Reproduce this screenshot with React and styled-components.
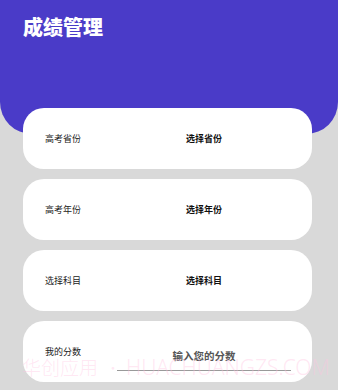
import React from "react";
import styled, { createGlobalStyle } from "styled-components";

const Global = createGlobalStyle`
  html, body { margin: 0; padding: 0; background: #d9d9d9; }
  body { font-family: "Noto Sans CJK SC", "Noto Sans", sans-serif; }
  * { box-sizing: border-box; }
`;

const Page = styled.div`
  position: relative;
  min-height: 390px;
  background: #d9d9d9;
  overflow: hidden;
`;

const Header = styled.header`
  height: 134px;
  background: #4a3bc8;
  border-radius: 0 0 32px 32px;
  padding: 12px 23px;
`;

const Title = styled.h1`
  margin: 0;
  color: #ffffff;
  font-size: 20px;
  font-weight: 900;
  line-height: 30px;
  letter-spacing: 0;
`;

const CardList = styled.div`
  display: flex;
  flex-direction: column;
  gap: 10px;
  margin-top: -26px;
  padding: 0 26px 0 23px;
`;

const Card = styled.div`
  height: 61px;
  background: #ffffff;
  border-radius: 21px;
  display: grid;
  grid-template-columns: ${(p) => p.$cols || "141px 1fr"};
  align-items: center;
  padding-left: 22px;
`;

const Label = styled.span`
  font-size: 9px;
  color: #222222;
  line-height: 14px;
`;

const Value = styled.span`
  font-size: 9px;
  font-weight: 700;
  color: #111111;
  line-height: 14px;
`;

const ScoreInput = styled.input`
  width: 174px;
  height: 30px;
  margin-top: 8px;
  border: none;
  border-bottom: 1px solid #9a9a9a;
  background: transparent;
  text-align: center;
  font-family: "Noto Sans CJK SC", "Noto Sans", sans-serif;
  font-size: 10.5px;
  font-weight: 700;
  outline: none;
  padding: 0;
  &::placeholder { color: #555555; }
`;

const Watermark = styled.div`
  position: absolute;
  left: 22px;
  top: 355px;
  display: flex;
  align-items: center;
  line-height: 24px;
  color: rgba(255, 195, 225, 0.4);
  white-space: nowrap;
  pointer-events: none;
  font-family: "Noto Sans CJK SC", "Noto Sans", sans-serif;
  font-weight: 300;
`;

const MarkCjk = styled.span`
  font-size: 19px;
`;

const MarkDot = styled.span`
  font-size: 14px;
  margin: 0 6px 0 8px;
`;

const MarkLatin = styled.span`
  font-family: "Noto Sans", sans-serif;
  font-size: 21px;
`;

const rows = [
  { label: "高考省份", value: "选择省份" },
  { label: "高考年份", value: "选择年份" },
  { label: "选择科目", value: "选择科目" },
];

export default function App() {
  return (
    <Page>
      <Global />
      <Header>
        <Title>成绩管理</Title>
      </Header>
      <CardList>
        {rows.map((r) => (
          <Card key={r.label}>
            <Label>{r.label}</Label>
            <Value>{r.value}</Value>
          </Card>
        ))}
        <Card $cols="72px 1fr">
          <Label>我的分数</Label>
          <ScoreInput placeholder="输入您的分数" />
        </Card>
      </CardList>
      <Watermark>
        <MarkCjk>华创应用</MarkCjk>
        <MarkDot>•</MarkDot>
        <MarkLatin>HUACHUANGZS.COM</MarkLatin>
      </Watermark>
    </Page>
  );
}
